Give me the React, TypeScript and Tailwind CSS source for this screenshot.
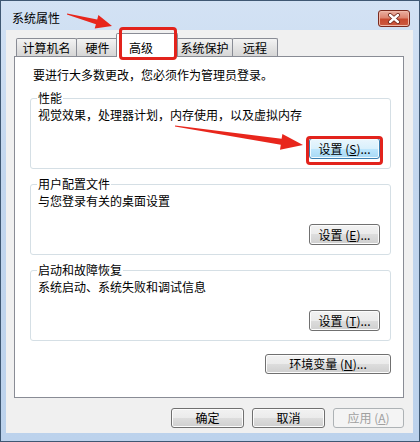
import type { ReactNode } from "react";

const FONT = "font-['Noto_Sans_CJK_SC','Noto_Sans',sans-serif]";

interface ButtonProps {
  children: ReactNode;
  className?: string;
  focused?: boolean;
  disabled?: boolean;
}

const Button = ({ children, className = "", focused, disabled }: ButtonProps) => {
  const look = disabled
    ? "border-[#adb2b5] bg-[#f4f4f4] text-[#a0a0a0]"
    : focused
      ? "border-[#3c7fb1] bg-[linear-gradient(#eaf6fd_0%,#d9f0fc_50%,#bee6fd_50%,#a7d9f5_100%)] shadow-[inset_0_0_0_1px_#f4fbfe]"
      : "border-[#707070] bg-[linear-gradient(#f2f2f2_0%,#ebebeb_50%,#dddddd_50%,#cfcfcf_100%)] shadow-[inset_0_0_0_1px_#fcfcfc]";
  return (
    <button
      type="button"
      className={`flex items-center justify-center rounded-[3px] border text-[12px] leading-[16px] ${look} ${className}`}
    >
      {children}
    </button>
  );
};

interface TabProps {
  label: string;
  className: string;
  active?: boolean;
}

const Tab = ({ label, className, active }: TabProps) =>
  active ? (
    <div
      className={`relative z-10 -mb-[1px] flex h-[24px] items-start rounded-t-[2px] border border-b-0 border-[#898c95] bg-white pt-[6px] pl-[12px] ${className}`}
    >
      {label}
    </div>
  ) : (
    <div
      className={`flex h-[18px] items-start justify-center rounded-t-[2px] border border-b-0 border-[#898c95] bg-[linear-gradient(#f3f3f3,#e4e4e4_50%,#d6d6d6)] pt-[1px] ${className}`}
    >
      {label}
    </div>
  );

interface GroupProps {
  title: string;
  desc: string;
  action: ReactNode;
}

const Group = ({ title, desc, action }: GroupProps) => (
  <fieldset className="flex flex-col rounded-[3px] border border-[#d5dfe5] pr-[10px] pb-[9px] pl-[7px]">
    <legend className="-ml-[1px] px-[1px] leading-[14px]">{title}</legend>
    <p className="mt-[2px]">{desc}</p>
    <div className="mt-[15px] flex justify-end">{action}</div>
  </fieldset>
);

const Key = ({ k }: { k: string }) => <span className="underline">{k}</span>;

const CloseIcon = () => (
  <svg width="14" height="11" viewBox="0 0 14 11">
    <path d="M3 2 L11 9 M11 2 L3 9" stroke="#6b2418" strokeWidth="4" strokeLinecap="round" />
    <path d="M3 2 L11 9 M11 2 L3 9" stroke="#ffffff" strokeWidth="2.4" strokeLinecap="round" />
  </svg>
);

export default function App() {
  return (
    <div className={`relative h-[442px] w-[420px] overflow-hidden text-[12px] leading-[16px] text-black ${FONT}`}>
      <div className="flex h-full w-full flex-col border border-[#3f5873] bg-[linear-gradient(#d3e2f4,#c2d6ee_40%,#bcd2ec)]">
        {/* title bar */}
        <div className="flex h-[29px] items-start justify-between pr-[9px] pl-[11px]">
          <span className="mt-[9px]">系统属性</span>
          <div className="mt-[9px] flex h-[17px] w-[32px] items-center justify-center rounded-[3px] border border-[#7a2a1e] bg-[linear-gradient(#eab0a2_0%,#dd8570_45%,#c84a30_55%,#cc5a40_100%)] shadow-[inset_0_0_0_1px_#f0b8a8]">
            <CloseIcon />
          </div>
        </div>

        {/* client */}
        <div className="mr-[6px] mb-[8px] ml-[5px] flex flex-1 flex-col bg-[#f0f0f0]">
          <div className="flex h-[26px] items-end pl-[10px]">
            <Tab label="计算机名" className="w-[61px]" />
            <Tab label="硬件" className="-ml-[1px] w-[43px]" />
            <Tab label="高级" active className="-mr-[2px] -ml-[3px] w-[62px]" />
            <Tab label="系统保护" className="w-[57px]" />
            <Tab label="远程" className="-ml-[1px] w-[46px]" />
          </div>

          <div className="ml-[8px] flex h-[342px] w-[390px] flex-col border border-[#898c95] bg-white pt-[10px] pr-[12px] pl-[15px]">
            <p className="ml-[3px]">要进行大多数更改，您必须作为管理员登录。</p>
            <div className="mt-[8px] flex flex-col gap-[8px]">
              <Group
                title="性能"
                desc="视觉效果，处理器计划，内存使用，以及虚拟内存"
                action={
                  <Button focused className="h-[21px] w-[71px]">
                    设置 (<Key k="S" />)...
                  </Button>
                }
              />
              <Group
                title="用户配置文件"
                desc="与您登录有关的桌面设置"
                action={
                  <Button className="h-[21px] w-[71px]">
                    设置 (<Key k="E" />)...
                  </Button>
                }
              />
              <Group
                title="启动和故障恢复"
                desc="系统启动、系统失败和调试信息"
                action={
                  <Button className="h-[21px] w-[71px]">
                    设置 (<Key k="T" />)...
                  </Button>
                }
              />
            </div>
            <div className="mt-[13px] flex justify-end">
              <Button className="h-[20px] w-[126px]">
                环境变量 (<Key k="N" />)...
              </Button>
            </div>
          </div>

          <div className="mt-[10px] flex justify-end gap-[8px] pr-[9px]">
            <Button className="h-[20px] w-[73px]">确定</Button>
            <Button className="h-[20px] w-[73px]">取消</Button>
            <Button disabled className="h-[20px] w-[71px]">
              应用 (<Key k="A" />)
            </Button>
          </div>
        </div>
      </div>

      {/* annotations */}
      <div className="pointer-events-none absolute top-[27px] left-[119px] z-20 h-[33px] w-[58px] rounded-[4px] border-[3px] border-[#e2231c]" />
      <div className="pointer-events-none absolute top-[136px] left-[306px] z-20 h-[29px] w-[77px] rounded-[4px] border-[3px] border-[#e2231c]" />
      <svg className="pointer-events-none absolute top-0 left-0 z-20" width="420" height="442">
        <polygon
          points="66.9,14.5 95.9,24.3 94.7,28.6 112,26 98.4,15.1 97.2,19.5 67.1,13.5"
          fill="#e8261c"
        />
        <polygon
          points="174.9,126.5 280.8,144.8 280,149.7 303,145 282.4,133.9 281.6,138.8 175.1,125.5"
          fill="#e8261c"
        />
      </svg>
    </div>
  );
}
